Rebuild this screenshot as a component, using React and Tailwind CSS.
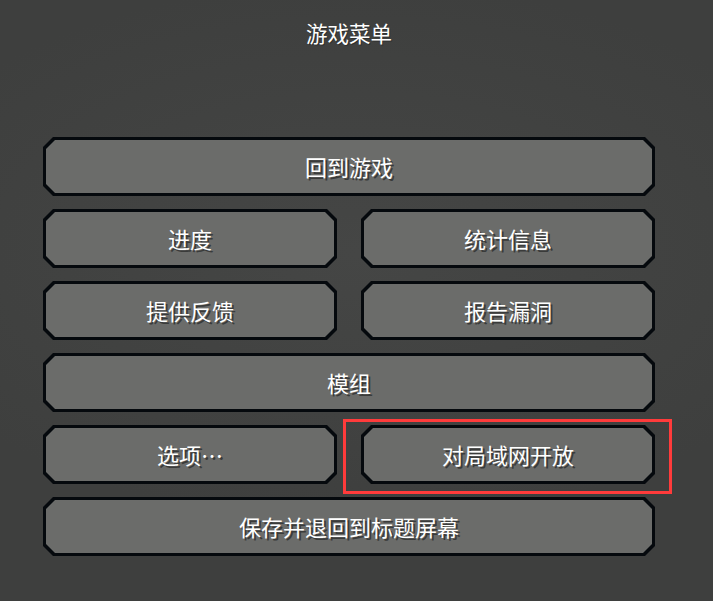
import React from 'react';

const MenuButton = ({ label, className = '' }) => (
    <div className={`h-[59px] bg-[#05090d] p-[3px] [clip-path:polygon(10px_0,calc(100%-10px)_0,100%_10px,100%_calc(100%-10px),calc(100%-10px)_100%,10px_100%,0_calc(100%-10px),0_10px)] ${className}`}>
        <div className="h-full bg-[#6b6c6a] flex items-center justify-center [clip-path:polygon(9px_0,calc(100%-9px)_0,100%_9px,100%_calc(100%-9px),calc(100%-9px)_100%,9px_100%,0_calc(100%-9px),0_9px)]">
            <span className="text-white text-[22px] leading-none font-normal [text-shadow:2px_2px_0_#3a3b3a] -mt-[1px]">
                {label}
            </span>
        </div>
    </div>
);

const App = () => {
    return (
        <div
            className="w-[713px] h-[601px] overflow-hidden bg-[#3e3f3e] bg-[radial-gradient(ellipse_70%_45%_at_50%_42%,#454645_0%,#424342_45%,#3e3f3e_100%)]"
            style={{ fontFamily: '"Noto Sans CJK SC", "Noto Sans", sans-serif' }}
        >
            <div className="ml-[43px] w-[612px] flex flex-col">
                <h1 className="mt-[21px] text-center text-white text-[21.5px] leading-[24px] font-normal [text-shadow:1px_1px_0_#2e2f2e]">
                    游戏菜单
                </h1>

                <div className="mt-[92px] flex flex-col gap-[13px]">
                    <MenuButton label="回到游戏" />
                    <div className="grid grid-cols-2 gap-x-[24px]">
                        <MenuButton label="进度" />
                        <MenuButton label="统计信息" />
                    </div>
                    <div className="grid grid-cols-2 gap-x-[24px]">
                        <MenuButton label="提供反馈" />
                        <MenuButton label="报告漏洞" />
                    </div>
                    <MenuButton label="模组" />
                    <div className="grid grid-cols-2 gap-x-[24px]">
                        <MenuButton label="选项…" />
                        <div className="relative">
                            <MenuButton label="对局域网开放" />
                            {/* highlight box */}
                            <div className="absolute -left-[18px] -right-[17px] -top-[6px] -bottom-[10px] border-[3px] border-[#ff3b3b] pointer-events-none" />
                        </div>
                    </div>
                    <MenuButton label="保存并退回到标题屏幕" />
                </div>
            </div>
        </div>
    );
};

export default App;
